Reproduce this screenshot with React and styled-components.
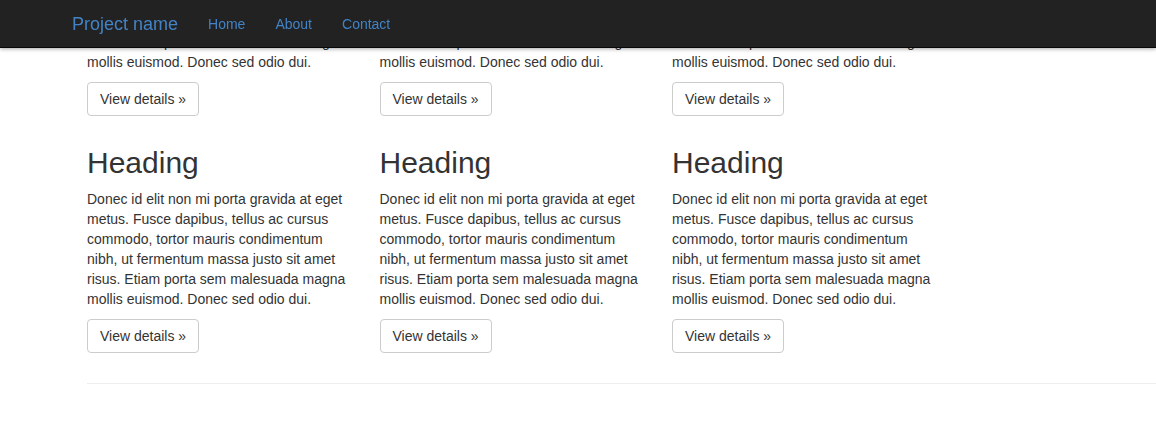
import React from "react";
import styled, { createGlobalStyle } from "styled-components";

const GlobalStyle = createGlobalStyle`
  html, body {
    margin: 0;
    padding: 0;
    overflow: hidden;
    background: #fff;
  }
  body {
    font-family: "Liberation Sans", Arial, Helvetica, sans-serif;
    font-size: 14px;
    line-height: 20px;
    color: #333;
  }
`;

const Navbar = styled.nav`
  position: fixed;
  top: 0;
  left: 0;
  right: 0;
  height: 47px;
  background-color: #222;
  border-bottom: 1px solid #080808;
  box-shadow: 0 1px 4px rgba(0, 0, 0, 0.35);
  display: flex;
  align-items: center;
  padding-left: 57px;
  z-index: 1000;
`;

const Brand = styled.a`
  font-size: 18px;
  line-height: 20px;
  padding: 0 15px;
  color: #4283c6;
  text-decoration: none;
`;

const NavLink = styled.a`
  font-size: 14px;
  line-height: 20px;
  padding: 0 15px;
  color: #4283c6;
  text-decoration: none;
  &:hover {
    color: #fff;
  }
`;

const Container = styled.div`
  width: 1140px;
  padding: 0 15px;
  margin-left: 72px;
  margin-top: -111px;
`;

const Row = styled.div`
  display: flex;
  margin: 0 -15px;
`;

const Col = styled.div`
  width: 292.5px;
  flex: 0 0 292.5px;
  box-sizing: border-box;
  padding: 0 15px;
`;

const Heading = styled.h2`
  font-size: 30px;
  font-weight: 500;
  line-height: 33px;
  margin: 20px 0 10px;
  color: #333;
`;

const Text = styled.p`
  margin: 0 0 10px;
  width: 262.5px;
`;

const Button = styled.a`
  display: inline-block;
  box-sizing: border-box;
  height: 34px;
  padding: 6px 12px;
  font-size: 14px;
  line-height: 20px;
  color: #333;
  background: #fff;
  border: 1px solid #ccc;
  border-radius: 4px;
  text-decoration: none;
  vertical-align: middle;
  cursor: pointer;
`;

const ButtonLine = styled.p`
  margin: 0 0 10px;
  height: 34px;
  display: flex;
  align-items: center;
`;

const Divider = styled.hr`
  margin: 20px 0;
  border: 0;
  border-top: 1px solid #eee;
  height: 0;
`;

const body =
  "Donec id elit non mi porta gravida at eget metus. Fusce dapibus, tellus ac cursus commodo, tortor mauris condimentum nibh, ut fermentum massa justo sit amet risus. Etiam porta sem malesuada magna mollis euismod. Donec sed odio dui.";

const Item = () => (
  <Col>
    <Heading>Heading</Heading>
    <Text>{body}</Text>
    <ButtonLine>
      <Button>View details &raquo;</Button>
    </ButtonLine>
  </Col>
);

export default function App() {
  return (
    <>
      <GlobalStyle />
      <Navbar>
        <Brand>Project name</Brand>
        <NavLink>Home</NavLink>
        <NavLink>About</NavLink>
        <NavLink>Contact</NavLink>
      </Navbar>
      <Container>
        <Row>
          <Item />
          <Item />
          <Item />
        </Row>
        <Row>
          <Item />
          <Item />
          <Item />
        </Row>
        <Divider />
      </Container>
    </>
  );
}
